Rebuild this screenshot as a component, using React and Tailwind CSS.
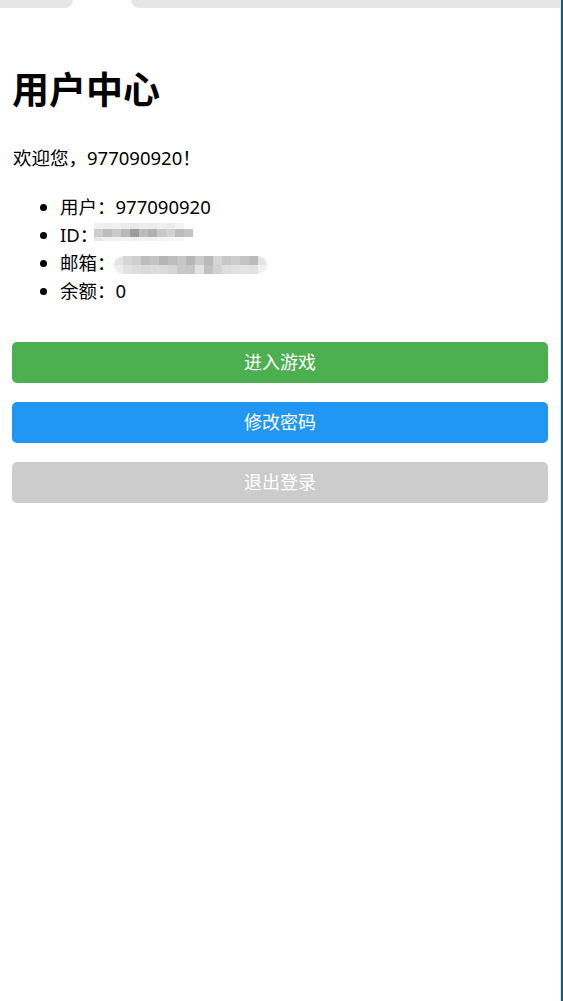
import React from 'react';

const idRows = [
  { h: 'h-[6px]', cells: ['bg-[#f1f1f1]', 'bg-[#eeeeee]', 'bg-[#f0f0f0]', 'bg-[#ececec]', 'bg-[#e9e9e9]', 'bg-[#eeeeee]', 'bg-[#ebebeb]', 'bg-[#f0f0f0]', 'bg-[#ececec]', 'bg-[#f3f3f3]', 'bg-white'] },
  { h: 'h-[8px]', cells: ['bg-[#cdcdcd]', 'bg-[#bdbdbd]', 'bg-[#c9c9c9]', 'bg-[#b9b9b9]', 'bg-[#9c9c9c]', 'bg-[#bcbcbc]', 'bg-[#b1b1b1]', 'bg-[#c8c8c8]', 'bg-[#d3d3d3]', 'bg-[#bcbcbc]', 'bg-[#c4c4c4]'] },
  { h: 'h-[4px]', cells: ['bg-[#e7e7e7]', 'bg-[#efefef]', 'bg-[#f1f1f1]', 'bg-[#f3f3f3]', 'bg-[#f0f0f0]', 'bg-[#f3f3f3]', 'bg-[#f2f2f2]', 'bg-[#f5f5f5]', 'bg-[#f6f6f6]', 'bg-[#f8f8f8]', 'bg-white'] },
];

const mailRows = [
  ['bg-[#e6e6e6]', 'bg-[#d6d6d6]', 'bg-[#cfcfcf]', 'bg-[#bdbdbd]', 'bg-[#c4c4c4]', 'bg-[#b5b5b5]', 'bg-[#bdbdbd]', 'bg-[#c6c6c6]', 'bg-[#b7b7b7]', 'bg-[#cbcbcb]', 'bg-[#bababa]', 'bg-[#d6d6d6]', 'bg-[#c8c8c8]', 'bg-[#cdcdcd]', 'bg-[#c3c3c3]', 'bg-[#bbbbbb]', 'bg-[#e4e4e4]'],
  ['bg-[#eeeeee]', 'bg-[#e2e2e2]', 'bg-[#dddddd]', 'bg-[#d9d9d9]', 'bg-[#dcdcdc]', 'bg-[#dadada]', 'bg-[#d4d4d4]', 'bg-[#c9c9c9]', 'bg-[#c6c6c6]', 'bg-[#e3e3e3]', 'bg-[#c1c1c1]', 'bg-[#d2d2d2]', 'bg-[#dedede]', 'bg-[#e1e1e1]', 'bg-[#e3e3e3]', 'bg-[#e2e2e2]', 'bg-[#f0f0f0]'],
];

const BlurId = () => (
  <span className="inline-flex flex-col align-top mt-[2px] -ml-[4px]">
    {idRows.map((row, i) => (
      <span key={i} className={`flex ${row.h}`}>
        {row.cells.map((c, j) => (
          <span key={j} className={`w-[9px] ${c}`} />
        ))}
      </span>
    ))}
  </span>
);

const BlurMail = () => (
  <span className="inline-flex flex-col align-top mt-[7px] -ml-[2px] rounded-full overflow-hidden">
    {mailRows.map((row, i) => (
      <span key={i} className="flex h-[9px]">
        {row.map((c, j) => (
          <span key={j} className={`w-[9px] ${c}`} />
        ))}
      </span>
    ))}
  </span>
);

const App = () => {
  return (
    <div className="flex min-h-screen bg-white text-black font-['Noto_Sans','Noto_Sans_CJK_SC',sans-serif]">
      <div className="w-[560px] flex flex-col">
        {/* top tab strip */}
        <div className="flex h-[8px]">
          <div className="w-[73px] bg-[#e6e6e6] rounded-br-[8px]" />
          <div className="w-[58px]" />
          <div className="flex-1 bg-[#e6e6e6] rounded-bl-[8px]" />
        </div>

        <div className="px-3">
          <h1 className="mt-[63px] text-[37px] leading-[37px] font-bold">用户中心</h1>

          <p className="mt-[36px] text-[18.5px] leading-[28px] ml-[1px]">欢迎您，977090920！</p>

          <ul className="mt-[21px] list-disc pl-[48px] text-[18.5px] leading-[28px]">
            <li>用户：977090920</li>
            <li>ID：<BlurId /></li>
            <li>邮箱：<BlurMail /></li>
            <li>余额：0</li>
          </ul>

          <div className="mt-[37px] flex flex-col gap-[19px]">
            <button className="h-[41px] w-full rounded-[5px] bg-[#4caf50] text-white text-[18px]">进入游戏</button>
            <button className="h-[41px] w-full rounded-[5px] bg-[#2196f3] text-white text-[18px]">修改密码</button>
            <button className="h-[41px] w-full rounded-[5px] bg-[#cccccc] text-white text-[18px]">退出登录</button>
          </div>
        </div>
      </div>
      <div className="w-[1px] bg-[#e4e4e4]" />
      <div className="w-[2px] bg-[#1e566c]" />
    </div>
  );
};

export default App;
